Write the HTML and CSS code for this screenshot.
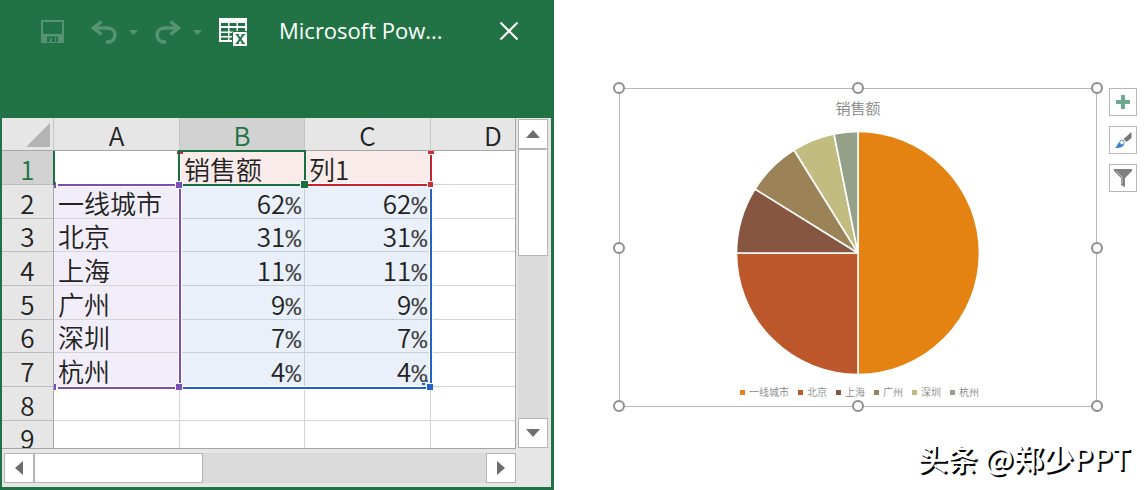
FILE: index.html
```html
<!DOCTYPE html>
<html lang="zh-CN">
<head>
<meta charset="utf-8">
<title>Microsoft PowerPoint 图表</title>
<link rel="stylesheet" href="styles.css">
</head>
<body>
<main class="workspace">
  <section class="workbook">
    <header class="titlebar">
      <div class="quick">
        <button class="tool dim save" aria-label="保存"><svg width="24" height="24" viewBox="0 0 24 24"><path d="M1 1h21v21H1z" fill="none" stroke="currentColor" stroke-width="2"/><path d="M1 12l2 2h17l2-2v10H1z" fill="currentColor"/><path d="M6 16.500h11v5.500h-6v-3.500H9V22H6z" fill="#217346"/><path d="M14 17h1v5h-1z" fill="currentColor"/></svg></button>
        <button class="tool dim" aria-label="撤消"><svg width="26" height="24" viewBox="0 0 26 24"><path d="M10.500 1.500L2.500 8l8 6.500M3 8H17a7 7 0 0 1 0 14h-2" fill="none" stroke="currentColor" stroke-width="3.500"/></svg></button>
        <button class="tool dim caret" aria-label="撤消列表"><svg width="9" height="5" viewBox="0 0 9 5"><path d="M0 0h9L4.500 5z" fill="currentColor"/></svg></button>
        <button class="tool dim redo" aria-label="恢复"><svg width="26" height="24" viewBox="0 0 26 24"><path d="M15.500 1.500l8 6.500-8 6.500M23 8H9a7 7 0 0 0 0 14h2" fill="none" stroke="currentColor" stroke-width="3.500"/></svg></button>
        <button class="tool dim caret" aria-label="恢复列表"><svg width="9" height="5" viewBox="0 0 9 5"><path d="M0 0h9L4.500 5z" fill="currentColor"/></svg></button>
        <button class="tool grid-tool" aria-label="在 Excel 中编辑数据"><svg width="30" height="30" viewBox="0 0 30 30"><path d="M0 0h28v24H0z" fill="#fff"/><path d="M2 5h7v3H2zM10.500 5h7v3h-7zM19 5h7v3h-7zM2 10h7v3.500H2zM10.500 10h7v3.500h-7zM19 10h7v3.500h-7zM2 15h7v3H2zM10.500 15h7v3h-7zM2 19.500h7V22H2zM10.500 19.500h6V22h-6z" fill="#217346"/><rect x="13.500" y="13.500" width="15" height="15" rx="1.500" fill="#fff" stroke="#217346"/><path d="M18 16.500l6.500 9M24.500 16.500l-6.500 9" stroke="#217346" stroke-width="2"/><path d="M16.500 16.500h3.500M22.500 16.500h3.500M16.500 25.500h3.500M22.500 25.500h3.500" stroke="#217346"/></svg></button>
      </div>
      <h1 class="caption">Microsoft Pow...</h1>
      <button class="tool close" aria-label="关闭"><svg width="20" height="20" viewBox="0 0 20 20"><path d="M1.500 1.500l17 17M18.500 1.500l-17 17" stroke="#fff" stroke-width="2.200"/></svg></button>
    </header>
    <div class="pane">
      <div class="sheet">
        <table class="cells">
          <colgroup><col class="col-head"><col class="col-wide"><col class="col-mid"><col class="col-wide"><col></colgroup>
          <thead><tr><th class="corner"><svg width="24" height="24" viewBox="0 0 24 24"><path d="M24 0v24H0z" fill="#b4b4b4"/></svg></th><th>A</th><th class="on">B</th><th>C</th><th class="last">D</th></tr></thead>
          <tbody>
            <tr><th class="on">1</th><td></td><td class="red">销售额</td><td class="red">列1</td><td></td></tr>
            <tr><th>2</th><td class="violet">一线城市</td><td class="num">62<span>%</span></td><td class="num">62<span>%</span></td><td></td></tr>
            <tr><th>3</th><td class="violet">北京</td><td class="num">31<span>%</span></td><td class="num">31<span>%</span></td><td></td></tr>
            <tr><th>4</th><td class="violet">上海</td><td class="num">11<span>%</span></td><td class="num">11<span>%</span></td><td></td></tr>
            <tr><th>5</th><td class="violet">广州</td><td class="num">9<span>%</span></td><td class="num">9<span>%</span></td><td></td></tr>
            <tr><th>6</th><td class="violet">深圳</td><td class="num">7<span>%</span></td><td class="num">7<span>%</span></td><td></td></tr>
            <tr><th>7</th><td class="violet">杭州</td><td class="num">4<span>%</span></td><td class="num">4<span>%</span></td><td></td></tr>
            <tr><th>8</th><td></td><td></td><td></td><td></td></tr>
            <tr><th>9</th><td></td><td></td><td></td><td></td></tr>
          </tbody>
        </table>
        <svg class="ranges" width="513" height="330" viewBox="2 118 513 330">
          <path d="M54 183h126v4H54zM178 187h4v202h-4zM54 386h376v4H54zM429 151h4v238h-4zM305 183h126v4H305zM178 151h3v36h-3z" fill="#fff"/>
          <path d="M308 184h119v2H308zM430 155h2v26h-2z" fill="#c8202f"/>
          <path d="M428 151h6v3h-6zM177 151h6v3h-6zM428 182h5v5h-5z" fill="#c8303c"/>
          <path d="M183 387h243v2H183zM430 189h2v194h-2z" fill="#2660c8"/>
          <path d="M427 384h6v6h-6zM426 380h2v2h-2zM422 383h3v2h-3z" fill="#2660c8"/>
          <path d="M58 184h117v2H58zM179 189h2v194h-2zM58 387h117v2H58z" fill="#7c4fb5"/>
          <path d="M54 182h2v6h-2zM176 182h6v6h-6zM54 384h2v6h-2zM176 384h6v6h-6z" fill="#7c4fb5"/>
          <path d="M53 151h2v34h-2z" fill="#187040"/>
          <path d="M179 181v-30h126v30M183 185h117" fill="none" stroke="#187040" stroke-width="2"/>
          <path d="M300 180h8v9h-8z" fill="#fff"/><path d="M301 181h7v7h-7z" fill="#187040"/>
        </svg>
      </div>
      <div class="scroll vertical">
        <button class="arrow" aria-label="向上滚动"><svg width="14" height="8" viewBox="0 0 14 8"><path d="M0 8l7-8 7 8z" fill="#6e6e6e"/></svg></button>
        <div class="thumb"></div>
        <button class="arrow end" aria-label="向下滚动"><svg width="14" height="8" viewBox="0 0 14 8"><path d="M0 0h14L7 8z" fill="#6e6e6e"/></svg></button>
      </div>
      <div class="scroll horizontal">
        <button class="arrow" aria-label="向左滚动"><svg width="8" height="14" viewBox="0 0 8 14"><path d="M8 0v14L0 7z" fill="#6e6e6e"/></svg></button>
        <div class="thumb"></div>
        <button class="arrow end" aria-label="向右滚动"><svg width="8" height="14" viewBox="0 0 8 14"><path d="M0 0v14l8-7z" fill="#6e6e6e"/></svg></button>
      </div>
    </div>
  </section>
  <section class="slide">
    <div class="stage">
      <figure class="chart">
        <figcaption class="chart-title">销售额</figcaption>
        <svg class="pie" width="244" height="244" viewBox="-122 -122 244 244" role="img" aria-label="销售额饼图">
          <g stroke="#fff" stroke-width="1.600" stroke-linejoin="round">
            <path d="M0 0V-121.500A121.500 121.500 0 0 1 0 121.500z" fill="#e48312"/>
            <path d="M0 0V121.500A121.500 121.500 0 0 1 -121.500 0z" fill="#bd582c"/>
            <path d="M0 0H-121.500A121.500 121.500 0 0 1 -103 -64z" fill="#865640"/>
            <path d="M0 0L-103 -64A121.500 121.500 0 0 1 -64 -103z" fill="#9b8357"/>
            <path d="M0 0L-64 -103A121.500 121.500 0 0 1 -24 -119z" fill="#c2bc80"/>
            <path d="M0 0L-24 -119A121.500 121.500 0 0 1 0 -121.500z" fill="#94a088"/>
          </g>
        </svg>
        <ul class="legend">
          <li class="c1">一线城市</li><li class="c2">北京</li><li class="c3">上海</li><li class="c4">广州</li><li class="c5">深圳</li><li class="c6">杭州</li>
        </ul>
        <i class="handle n w"></i><i class="handle n mid"></i><i class="handle n e"></i>
        <i class="handle w half"></i><i class="handle e half"></i>
        <i class="handle s w"></i><i class="handle s mid"></i><i class="handle s e"></i>
      </figure>
      <div class="side">
        <button class="side-button" aria-label="图表元素"><svg width="14" height="14" viewBox="0 0 14 14"><path d="M5 0h4v5h5v4H9v5H5V9H0V5h5z" fill="#6fa88c"/></svg></button>
        <button class="side-button" aria-label="图表样式"><svg width="18" height="18" viewBox="0 0 18 18"><path d="M17.500 1v6l-5 4-3-3z" fill="#777"/><path d="M1 17c2-1 2-3 3-4.500 2-3 6-2 6 .5S7 17 1 17z" fill="#3f7fc1"/><circle cx="8" cy="11.500" r="2.300" fill="#fff" stroke="#5a93ce"/></svg></button>
        <button class="side-button" aria-label="图表筛选器"><svg width="20" height="20" viewBox="0 0 20 20"><path d="M1 1h18v2l-7 7v9l-4-2v-7L1 3z" fill="#7f7f7f"/><path d="M3 3l6 6v7" fill="none" stroke="#c4c4c4"/></svg></button>
      </div>
    </div>
    <p class="credit">头条 @郑少PPT</p>
  </section>
</main>
</body>
</html>
```

FILE: styles.css
```css
* { box-sizing: border-box; }
body { margin: 0; background: #fff; font-family: "Noto Sans CJK SC", sans-serif; }
button { padding: 0; border: 0; background: none; font: inherit; }
svg { display: block; }

.workspace { display: grid; grid-template-columns: 554fr 592fr; height: 100vh; }

.workbook { display: flex; flex-direction: column; min-width: 0; min-height: 0; padding: 0 3px 3px 2px; background: #217346; }
.titlebar { display: flex; flex: none; align-items: center; height: 118px; padding: 0 32px 56px 39px; color: #fff; }
.quick { display: flex; align-items: center; padding-top: 2px; }
.tool { display: block; }
.dim { color: #579373; }
.save { margin-right: 26px; }
.caret { margin: 0 17px 0 12px; }
.grid-tool { padding-top: 2px; }
.caption { flex: 1; margin: 0 0 0 30px; padding-bottom: 2px; font: 500 22px/30px "Open Sans", "Noto Sans", sans-serif; }

.pane { display: grid; flex: 1; grid-template-columns: 1fr 30px; grid-template-rows: 1fr 30px; gap: 4px 2px; min-height: 0; padding: 0 3px 4px 0; background: #e6e6e6; }
.sheet { position: relative; min-height: 0; overflow: hidden; border-right: 1px solid #a6a6a6; border-bottom: 1px solid #a6a6a6; }
.cells { width: 100%; table-layout: fixed; border-spacing: 0; color: #222; font-size: 26px; font-weight: 350; line-height: 28px; }
.col-head { width: 52px; }
.col-wide { width: 126px; }
.col-mid { width: 125px; }
.cells th { height: 34px; padding: 2px 0 0; border-right: 1px solid #a6a6a6; border-bottom: 1px solid #bdbdbd; background: #e6e6e6; font-weight: 350; }
.cells thead th { height: 33px; border-right-color: #c4c4c4; border-bottom-color: #a6a6a6; }
.cells .on { background: #d2d2d2; color: #217346; }
.cells .last { padding-left: 40px; border-right: 0; }
.corner svg { margin-left: 24px; }
.cells td { height: 34px; padding: 2px 4px 0; border-right: 1px solid #d4d4d4; border-bottom: 1px solid #d4d4d4; background: #fff; white-space: nowrap; }
.cells td:last-child { border-right: 0; }
.cells tbody tr:nth-child(3n) > * { height: 33px; }
.cells .red { background: #faebeb; }
.cells .violet { background: #f2eef9; }
.cells .num { padding-right: 3px; background: #e9f0fa; border-color: #c5cedb; text-align: right; }
.num span { color: #444; font-family: "Liberation Mono", monospace; font-size: 26px; line-height: 0; }
.ranges { position: absolute; top: 0; left: 0; }

.scroll { display: flex; background: #dadada; }
.vertical { flex-direction: column; margin: 1px 0; }
.arrow { display: grid; flex: none; place-items: center; width: 30px; height: 30px; border: 1px solid #b4b4b4; background: #fff; }
.thumb { border: 1px solid #b4b4b4; background: #fff; }
.vertical .thumb { height: 107px; }
.vertical .end { margin-top: auto; }
.horizontal { margin-left: 2px; }
.horizontal .thumb { width: 169px; }
.horizontal .end { margin-left: auto; }

.slide { display: flex; flex-direction: column; min-width: 0; padding: 88px 9px 0 65px; }
.stage { display: flex; align-items: flex-start; gap: 12px; }
.chart { position: relative; display: flex; flex: 1; flex-direction: column; align-items: center; margin: 0; padding: 7px 0 6px; border: 1px solid #b8b8b8; color: #858585; font-weight: 350; }
.chart-title { font-size: 15px; line-height: 24px; }
.pie { margin: 11px 0 9px; }
.legend { display: flex; gap: 9px; margin: 0; padding: 0 0 0 3px; list-style: none; font-size: 10px; line-height: 16px; }
.legend li { display: flex; align-items: center; gap: 4px; }
.legend li::before { width: 5px; height: 5px; background: currentColor; content: ""; }
.c1::before { color: #e48312; }
.c2::before { color: #bd582c; }
.c3::before { color: #865640; }
.c4::before { color: #9b8357; }
.c5::before { color: #c2bc80; }
.c6::before { color: #94a088; }
.handle { position: absolute; width: 12px; height: 12px; border: 2px solid #8e8e8e; border-radius: 50%; background: #fff; }
.n { top: -7px; }
.s { bottom: -6px; }
.w { left: -7px; }
.e { right: -7px; }
.mid { left: calc(50% - 6px); }
.half { top: calc(50% - 6px); }
.side { display: flex; flex-direction: column; gap: 10px; }
.side-button { display: grid; place-items: center; width: 28px; height: 28px; border: 1px solid #b8b8b8; background: #fff; }
.credit { align-self: flex-end; margin: 28px 7px 0 0; color: #fff; font-size: 30px; font-weight: 500; line-height: 44px; text-shadow: 2px 2px 0 #000; white-space: nowrap; }
```
